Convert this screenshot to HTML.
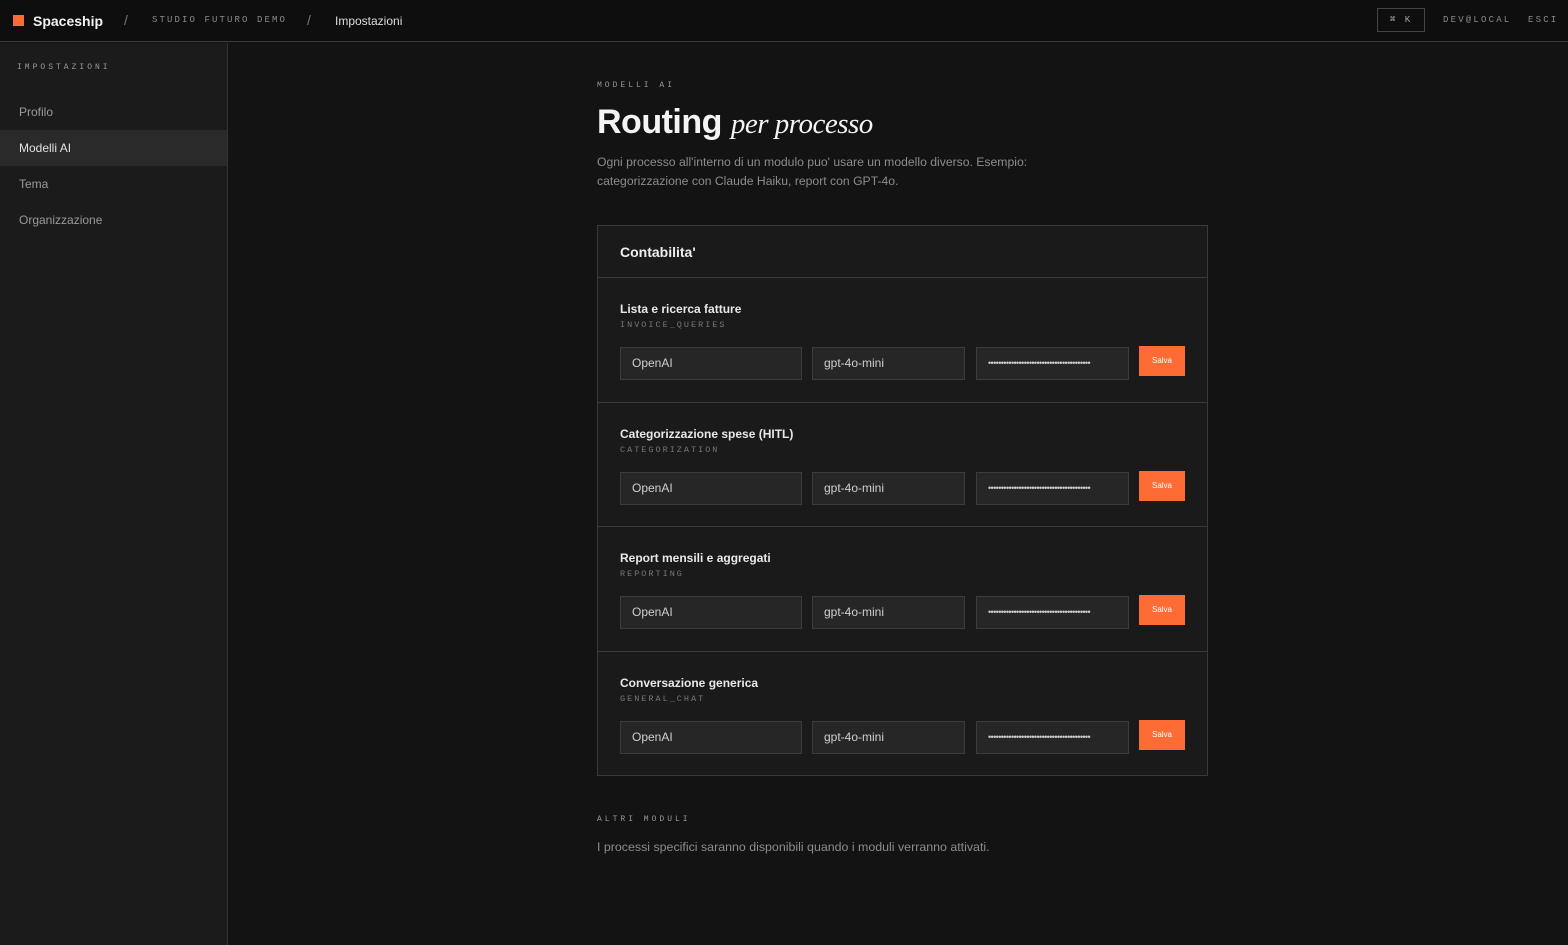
<!DOCTYPE html>
<html><head><meta charset="utf-8"><style>
*{box-sizing:border-box;margin:0;padding:0}
body{width:1568px;height:945px;background:#131313;font-family:"Liberation Sans",sans-serif;color:#e8e8e8;position:relative;overflow:hidden}
.top{position:absolute;left:0;top:0;width:1568px;height:42px;background:#0e0e0e;border-bottom:1px solid #3a3a3a}
.abs{position:absolute;white-space:nowrap}
.mono{font-family:"Liberation Mono",monospace;letter-spacing:2px;text-transform:uppercase}
.side{position:absolute;left:0;top:43px;width:228px;height:902px;background:#1b1b1b;border-right:1px solid #333}
.nav{position:absolute;left:0;width:227px;height:36px;line-height:36px;padding-left:19px;font-size:12px;color:#9a9a9a}
.card{position:absolute;left:597px;top:225px;width:611px;height:551px;border:1px solid #3a3a3a;background:#1a1a1a}
.row{position:absolute;left:0;width:609px;height:125px;border-top:1px solid #3a3a3a}
.inp{position:absolute;top:69px;height:33px;background:#262626;border:1px solid #3c3c3c;font-size:12px;color:#cfcfcf;line-height:31px;padding-left:11px;overflow:hidden}
.pw{letter-spacing:-0.6px;font-size:9px;padding-right:10px}
.btn{position:absolute;left:541px;top:68px;width:46px;height:30px;background:#ff6b35;color:#fff;font-size:8px;text-align:center;line-height:30px}
</style></head><body>
<div class="top">
<div class="abs" style="left:13px;top:15px;width:11px;height:11px;background:#ff6b35"></div>
<div class="abs" style="left:33px;top:13px;font-size:14px;font-weight:bold;color:#f2f2f2">Spaceship</div>
<div class="abs" style="left:124px;top:12px;font-size:14px;color:#777">/</div>
<div class="abs mono" style="left:152px;top:15px;font-size:9px;color:#8a8a8a;letter-spacing:2.1px">Studio Futuro Demo</div>
<div class="abs" style="left:307px;top:12px;font-size:14px;color:#777">/</div>
<div class="abs" style="left:335px;top:14px;font-size:12px;color:#ddd">Impostazioni</div>
<div class="abs mono" style="left:1377px;top:8px;width:48px;height:24px;border:1px solid #444;font-size:9px;color:#aaa;line-height:22px;text-align:center">⌘ K</div>
<div class="abs mono" style="left:1443px;top:15px;font-size:9px;color:#8a8a8a;letter-spacing:2.2px">dev@local</div>
<div class="abs mono" style="left:1528px;top:15px;font-size:9px;color:#8a8a8a;letter-spacing:2.2px">Esci</div>
</div>
<div class="side">
<div class="abs mono" style="left:17px;top:20px;font-size:8px;color:#999;letter-spacing:3px">Impostazioni</div>
<div class="nav" style="top:51px">Profilo</div>
<div class="nav" style="top:87px;background:#2a2a2a;color:#e2e2e2">Modelli AI</div>
<div class="nav" style="top:123px">Tema</div>
<div class="nav" style="top:159px">Organizzazione</div>
</div>
<div class="abs mono" style="left:597px;top:81px;font-size:8px;color:#999;letter-spacing:3px">Modelli AI</div>
<div class="abs" style="left:597px;top:103px;font-size:34px;font-weight:bold;color:#f4f4f4;letter-spacing:-0.5px">Routing <span style="font-family:'Liberation Serif',serif;font-style:italic;font-weight:normal;font-size:29px">per processo</span></div>
<div class="abs" style="left:597px;top:153px;font-size:12.2px;line-height:19px;color:#8c8c8c">Ogni processo all'interno di un modulo puo' usare un modello diverso. Esempio:<br>categorizzazione con Claude Haiku, report con GPT-4o.</div>
<div class="card">
<div class="abs" style="left:22px;top:18px;font-size:14px;font-weight:bold;color:#eee">Contabilita'</div>
<div class="row" style="top:51px">
<div class="abs" style="left:22px;top:24px;font-size:12px;font-weight:bold">Lista e ricerca fatture</div>
<div class="abs mono" style="left:22px;top:42px;font-size:8.5px;color:#777">invoice_queries</div>
<div class="inp" style="left:22px;width:182px">OpenAI</div><div class="inp" style="left:214px;width:153px">gpt-4o-mini</div><div class="inp pw" style="left:378px;width:153px">••••••••••••••••••••••••••••••••••••••••</div><div class="btn">Salva</div>
</div>
<div class="row" style="top:176px">
<div class="abs" style="left:22px;top:24px;font-size:12px;font-weight:bold">Categorizzazione spese (HITL)</div>
<div class="abs mono" style="left:22px;top:42px;font-size:8.5px;color:#777">categorization</div>
<div class="inp" style="left:22px;width:182px">OpenAI</div><div class="inp" style="left:214px;width:153px">gpt-4o-mini</div><div class="inp pw" style="left:378px;width:153px">••••••••••••••••••••••••••••••••••••••••</div><div class="btn">Salva</div>
</div>
<div class="row" style="top:300px">
<div class="abs" style="left:22px;top:24px;font-size:12px;font-weight:bold">Report mensili e aggregati</div>
<div class="abs mono" style="left:22px;top:42px;font-size:8.5px;color:#777">reporting</div>
<div class="inp" style="left:22px;width:182px">OpenAI</div><div class="inp" style="left:214px;width:153px">gpt-4o-mini</div><div class="inp pw" style="left:378px;width:153px">••••••••••••••••••••••••••••••••••••••••</div><div class="btn">Salva</div>
</div>
<div class="row" style="top:425px">
<div class="abs" style="left:22px;top:24px;font-size:12px;font-weight:bold">Conversazione generica</div>
<div class="abs mono" style="left:22px;top:42px;font-size:8.5px;color:#777">general_chat</div>
<div class="inp" style="left:22px;width:182px">OpenAI</div><div class="inp" style="left:214px;width:153px">gpt-4o-mini</div><div class="inp pw" style="left:378px;width:153px">••••••••••••••••••••••••••••••••••••••••</div><div class="btn">Salva</div>
</div>
</div>
<div class="abs mono" style="left:597px;top:815px;font-size:8px;color:#999;letter-spacing:3px">Altri moduli</div>
<div class="abs" style="left:597px;top:840px;font-size:12.4px;color:#8c8c8c">I processi specifici saranno disponibili quando i moduli verranno attivati.</div>
</body></html>
